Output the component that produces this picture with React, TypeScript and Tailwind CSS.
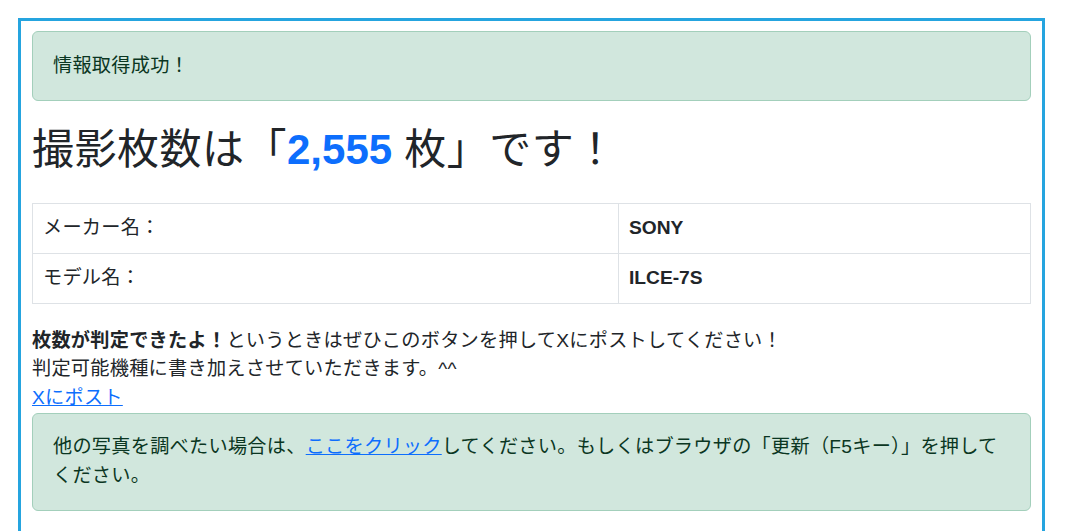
export default function App() {
  return (
    <div className="min-h-[531px] bg-white pt-[18px] pl-[18px] font-['Liberation_Sans','Noto_Sans_CJK_JP',sans-serif] text-[19.2px] leading-[28.8px] text-[#212529]">
      <div className="w-[1027px] border-[3px] border-[#25a4df] px-[11px] pt-[10px] pb-[20px]">
        {/* Success alert */}
        <div className="rounded-[6px] border border-[#a3cfbb] bg-[#d1e7dd] px-[20px] py-[19.6px] text-[#0a3622] tracking-[0.25px]">
          情報取得成功！
        </div>

        {/* Shot count heading */}
        <h1 className="mt-[24px] mb-[28px] text-[42px] leading-[50px] font-normal tracking-[0.5px]">
          撮影枚数は「<span className="font-bold text-[#0d6efd] tracking-normal">2,555</span> 枚」です！
        </h1>

        {/* Camera info */}
        <table className="w-full border-collapse">
          <tbody>
            <tr>
              <td className="w-[586px] border border-[#dee2e6] px-[10px] py-[10px] tracking-[0.25px]">メーカー名：</td>
              <td className="border border-[#dee2e6] px-[10px] py-[10px] font-bold">SONY</td>
            </tr>
            <tr>
              <td className="border border-[#dee2e6] px-[10px] py-[10px] tracking-[0.25px]">モデル名：</td>
              <td className="border border-[#dee2e6] px-[10px] py-[10px] font-bold">ILCE-7S</td>
            </tr>
          </tbody>
        </table>

        <p className="mt-[23px] tracking-[0.25px]">
          <b>枚数が判定できたよ！</b>というときはぜひこのボタンを押してXにポストしてください！
          <br />
          判定可能機種に書き加えさせていただきます。^^
          <br />
          <a href="#" className="text-[#0d6efd] underline">Xにポスト</a>
        </p>

        {/* Retry alert */}
        <div className="rounded-[6px] border border-[#a3cfbb] bg-[#d1e7dd] px-[20px] py-[19.2px] text-[#0a3622] tracking-[0.25px]">
          他の写真を調べたい場合は、<a href="#" className="text-[#0d6efd] underline">ここをクリック</a>してください。もしくはブラウザの「更新（F5キー）」を押して
          <br />
          ください。
        </div>
      </div>
    </div>
  );
}
